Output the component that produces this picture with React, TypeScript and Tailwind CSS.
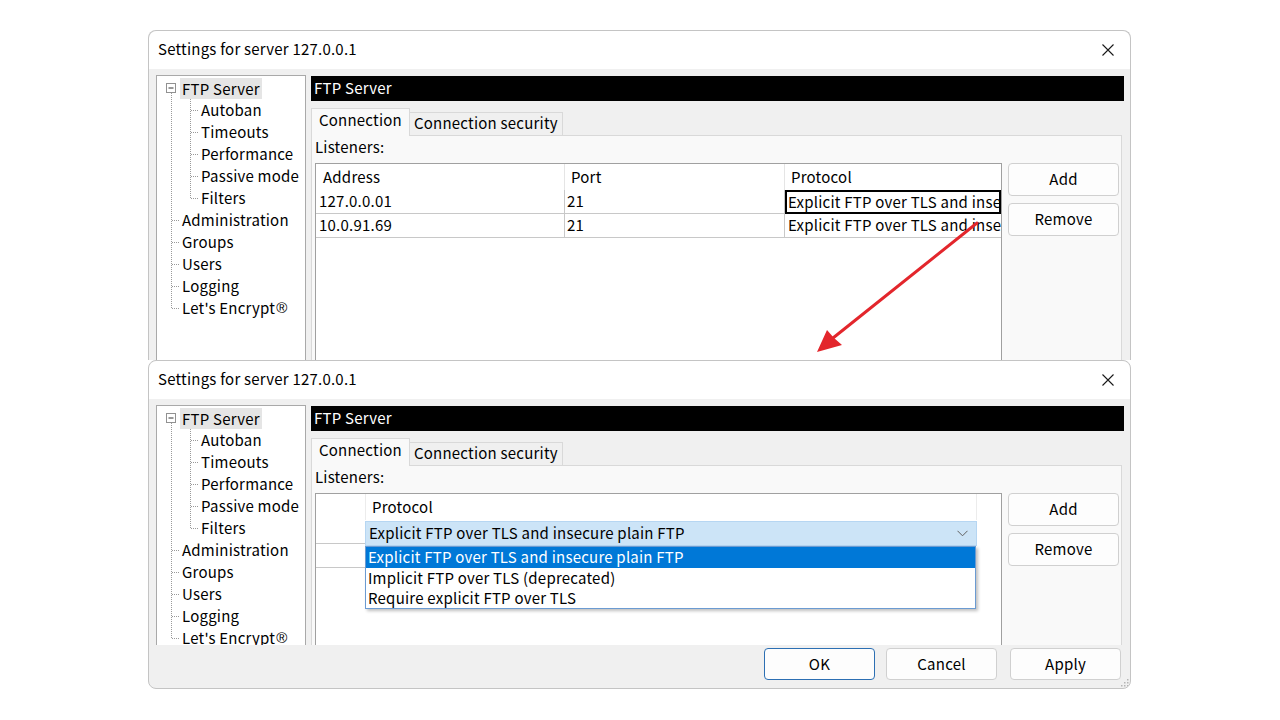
import React from 'react';

const treeTop = ['Administration', 'Groups', 'Users', 'Logging', "Let's Encrypt"];
const treeChildren = ['Autoban', 'Timeouts', 'Performance', 'Passive mode', 'Filters'];

const protocols = [
  'Explicit FTP over TLS and insecure plain FTP',
  'Implicit FTP over TLS (deprecated)',
  'Require explicit FTP over TLS',
];

const TreePanel = () => {
  const rowY = (i: number) => 12 + 22 * i;
  return (
    <div className="relative w-[150px] h-[320px] shrink-0 border border-[#a9a9a9] bg-white">
      {/* connector lines */}
      <svg className="absolute left-0 top-0" width="148" height="300">
        <g stroke="#9a9a9a" strokeWidth="1" strokeDasharray="1 1" fill="none">
          <line x1="14.5" y1="17" x2="14.5" y2={rowY(10) + 0.5} />
          <line x1="33.5" y1="23" x2="33.5" y2={rowY(5) + 0.5} />
          {treeChildren.map((_, i) => (
            <line key={'c' + i} x1="34" y1={rowY(i + 1) + 0.5} x2="42" y2={rowY(i + 1) + 0.5} />
          ))}
          {treeTop.map((_, i) => (
            <line key={'t' + i} x1="15" y1={rowY(i + 6) + 0.5} x2="23" y2={rowY(i + 6) + 0.5} />
          ))}
        </g>
        <rect x="9.5" y="7.5" width="9" height="9" fill="#fff" stroke="#919191" />
        <line x1="11.5" y1="12" x2="16.5" y2="12" stroke="#333" strokeWidth="1" />
      </svg>
      <div className="relative flex flex-col pt-[1px]">
        <div className="h-[22px] flex items-center pl-[23px]">
          <span className="bg-[#e5e5e5] h-[21px] leading-[21px] px-[2px]">FTP Server</span>
        </div>
        {treeChildren.map((t) => (
          <div key={t} className="h-[22px] flex items-center pl-[44px]">
            {t}
          </div>
        ))}
        {treeTop.map((t) => (
          <div key={t} className="h-[22px] flex items-center pl-[25px]">
            {t}
            {t === "Let's Encrypt" && (
              <span className="font-['Liberation_Sans',sans-serif] text-[15px] ml-[1px]">®</span>
            )}
          </div>
        ))}
      </div>
    </div>
  );
};

const SideButton = ({ label }: { label: string }) => (
  <div className="w-[111px] h-[33px] flex items-center justify-center pb-[1px] leading-[20px] rounded-[4px] border border-[#d0d0d0] bg-[#fdfdfd]">
    {label}
  </div>
);

const TopList = () => (
  <div className="w-[687px] h-[230px] border border-[#a0a0a0] bg-white shrink-0">
    <div className="grid grid-cols-[249px_220px_1fr] h-[26px]">
      <div className="border-r border-[#e5e5e5] pl-[7px] flex items-center">Address</div>
      <div className="border-r border-[#e5e5e5] pl-[6px] flex items-center">Port</div>
      <div className="pl-[6px] flex items-center">Protocol</div>
    </div>
    <div className="grid grid-cols-[249px_220px_1fr] h-[24px]">
      <div className="border-r border-b border-[#c8c8c8] pl-[3px] flex items-center">127.0.0.01</div>
      <div className="border-r border-b border-[#c8c8c8] pl-[2px] flex items-center">21</div>
      <div className="border-2 border-black pl-[1px] flex items-center whitespace-nowrap overflow-hidden">
        Explicit FTP over TLS and insecure plain FTP
      </div>
    </div>
    <div className="grid grid-cols-[249px_220px_1fr] h-[24px]">
      <div className="border-r border-b border-[#c8c8c8] pl-[3px] flex items-center">10.0.91.69</div>
      <div className="border-r border-b border-[#c8c8c8] pl-[2px] flex items-center">21</div>
      <div className="border-b border-[#c8c8c8] pl-[3px] flex items-center whitespace-nowrap overflow-hidden">
        Explicit FTP over TLS and insecure plain FTP
      </div>
    </div>
  </div>
);

const BottomList = () => (
  <div className="w-[687px] h-[230px] border border-[#a0a0a0] bg-white shrink-0">
    <div className="flex h-[26px]">
      <div className="w-[49px]" />
      <div className="w-[612px] border-l border-r border-[#ececec] pl-[6px] flex items-center">Protocol</div>
    </div>
    <div className="flex h-[24px]">
      <div className="w-[49px] h-[24px] border-b border-[#c8c8c8]" />
      <div className="relative w-[612px] h-[25px] mt-[1px] z-10">
        <div className="h-[25px] bg-[#cce4f7] border border-[#b6d6f2] pl-[3px] pr-[8px] flex items-center justify-between whitespace-nowrap">
          <span>Explicit FTP over TLS and insecure plain FTP</span>
          <svg width="11" height="7" viewBox="0 0 11 7">
            <polyline points="0.5,0.8 5.5,5.8 10.5,0.8" fill="none" stroke="#606060" strokeWidth="1" />
          </svg>
        </div>
        <div className="absolute left-0 top-full w-[611px] bg-white border border-[#6b9bd2] shadow-[2px_2px_3px_rgba(0,0,0,0.25)]">
          {protocols.map((p, i) => (
            <div
              key={p}
              className={
                i === 0
                  ? 'h-[21px] bg-[#0078d7] text-white pl-[2px] flex items-center whitespace-nowrap'
                  : 'h-[20px] pl-[2px] flex items-center whitespace-nowrap'
              }
            >
              {p}
            </div>
          ))}
        </div>
      </div>
    </div>
    <div className="flex h-[24px]">
      <div className="w-[49px] h-[24px] border-b border-[#c8c8c8]" />
    </div>
  </div>
);

const TitleBar = () => (
  <div className="h-[38px] shrink-0 bg-white flex items-center justify-between pl-[9px] pr-[16px] pb-[1px] rounded-t-[8px]">
    <span>Settings for server 127.0.0.1</span>
    <svg width="12" height="12" viewBox="0 0 12 12">
      <path d="M0.5 0.5 L11.5 11.5 M11.5 0.5 L0.5 11.5" stroke="#1a1a1a" strokeWidth="1.1" />
    </svg>
  </div>
);

const Body = ({ bottom }: { bottom: boolean }) => (
  <div className="flex pl-[7px] pt-[6px] gap-[5px]">
    <TreePanel />
    <div className="flex flex-col w-[813px] pt-[1px]">
      <div className="h-[25px] bg-black text-white pl-[3px] pb-[1px] flex items-center">FTP Server</div>
      <div className="flex items-end h-[28px] mt-[6px]">
        <div className="w-[99px] h-[28px] border border-b-0 border-[#d9d9d9] bg-[#f9f9f9] pl-[7px] pb-[4px] flex items-center relative z-10 -mb-[1px]">
          Connection
        </div>
        <div className="w-[153px] h-[23px] border-t border-r border-[#d9d9d9] bg-[#f0f0f0] pl-[4px] pb-[2px] flex items-center">
          Connection security
        </div>
      </div>
      <div className="w-[811px] h-[280px] border border-[#d9d9d9] bg-[#f9f9f9]">
        <div className="h-[20px] mt-[1px] pl-[3px] flex items-center">Listeners:</div>
        <div className="flex mt-[6px] ml-[3px] gap-[6px]">
          {bottom ? <BottomList /> : <TopList />}
          <div className="flex flex-col gap-[7px]">
            <SideButton label="Add" />
            <SideButton label="Remove" />
          </div>
        </div>
      </div>
    </div>
  </div>
);

const FooterButton = ({ label, primary, className }: { label: string; primary?: boolean; className?: string }) => (
  <div
    className={
      (primary ? 'border-[#2c6fb3] ' : 'border-[#d0d0d0] ') +
      'w-[111px] h-[32px] rounded-[4px] border bg-[#fdfdfd] flex items-center justify-center pb-[1px] leading-[20px] ' +
      (className ?? '')
    }
  >
    {label}
  </div>
);

export default function App() {
  return (
    <div className="relative w-[1280px] h-[720px] bg-white overflow-hidden text-[15px] tracking-[0.22px] text-black font-['Noto_Sans_CJK_SC','Noto_Sans',sans-serif]">
      <div className="flex flex-col pl-[148px] pt-[30px] w-[1131px]">
        {/* first screenshot window, cut off by the second */}
        <div className="h-[330px] border border-b-0 border-[#c4c4c4] rounded-t-[8px] bg-[#f0f0f0] overflow-hidden flex flex-col">
          <TitleBar />
          <Body bottom={false} />
        </div>
        {/* second screenshot window */}
        <div className="relative h-[329px] border border-[#c4c4c4] rounded-[8px] bg-[#f0f0f0] overflow-hidden flex flex-col">
          <TitleBar />
          <div className="h-[246px] overflow-hidden">
            <Body bottom={true} />
          </div>
          <div className="relative flex-1 flex justify-end items-start pt-[3px] pr-[9px]">
            <FooterButton label="OK" primary />
            <FooterButton label="Cancel" className="ml-[11px]" />
            <FooterButton label="Apply" className="ml-[13px] w-[110px]" />
            <svg className="absolute right-[1px] bottom-[1px]" width="9" height="9" viewBox="0 0 9 9">
              <g fill="#b5b5b5">
                <rect x="7" y="1" width="1.5" height="1.5" />
                <rect x="4" y="4" width="1.5" height="1.5" />
                <rect x="7" y="4" width="1.5" height="1.5" />
                <rect x="1" y="7" width="1.5" height="1.5" />
                <rect x="4" y="7" width="1.5" height="1.5" />
                <rect x="7" y="7" width="1.5" height="1.5" />
              </g>
            </svg>
          </div>
        </div>
      </div>
      {/* red annotation arrow */}
      <svg className="absolute left-0 top-0 pointer-events-none" width="1280" height="720">
        <line x1="977" y1="223" x2="833" y2="338" stroke="#e3262c" strokeWidth="3" strokeLinecap="round" />
        <polygon points="817,352 827,330 834,338 842,345" fill="#e3262c" />
      </svg>
    </div>
  );
}
